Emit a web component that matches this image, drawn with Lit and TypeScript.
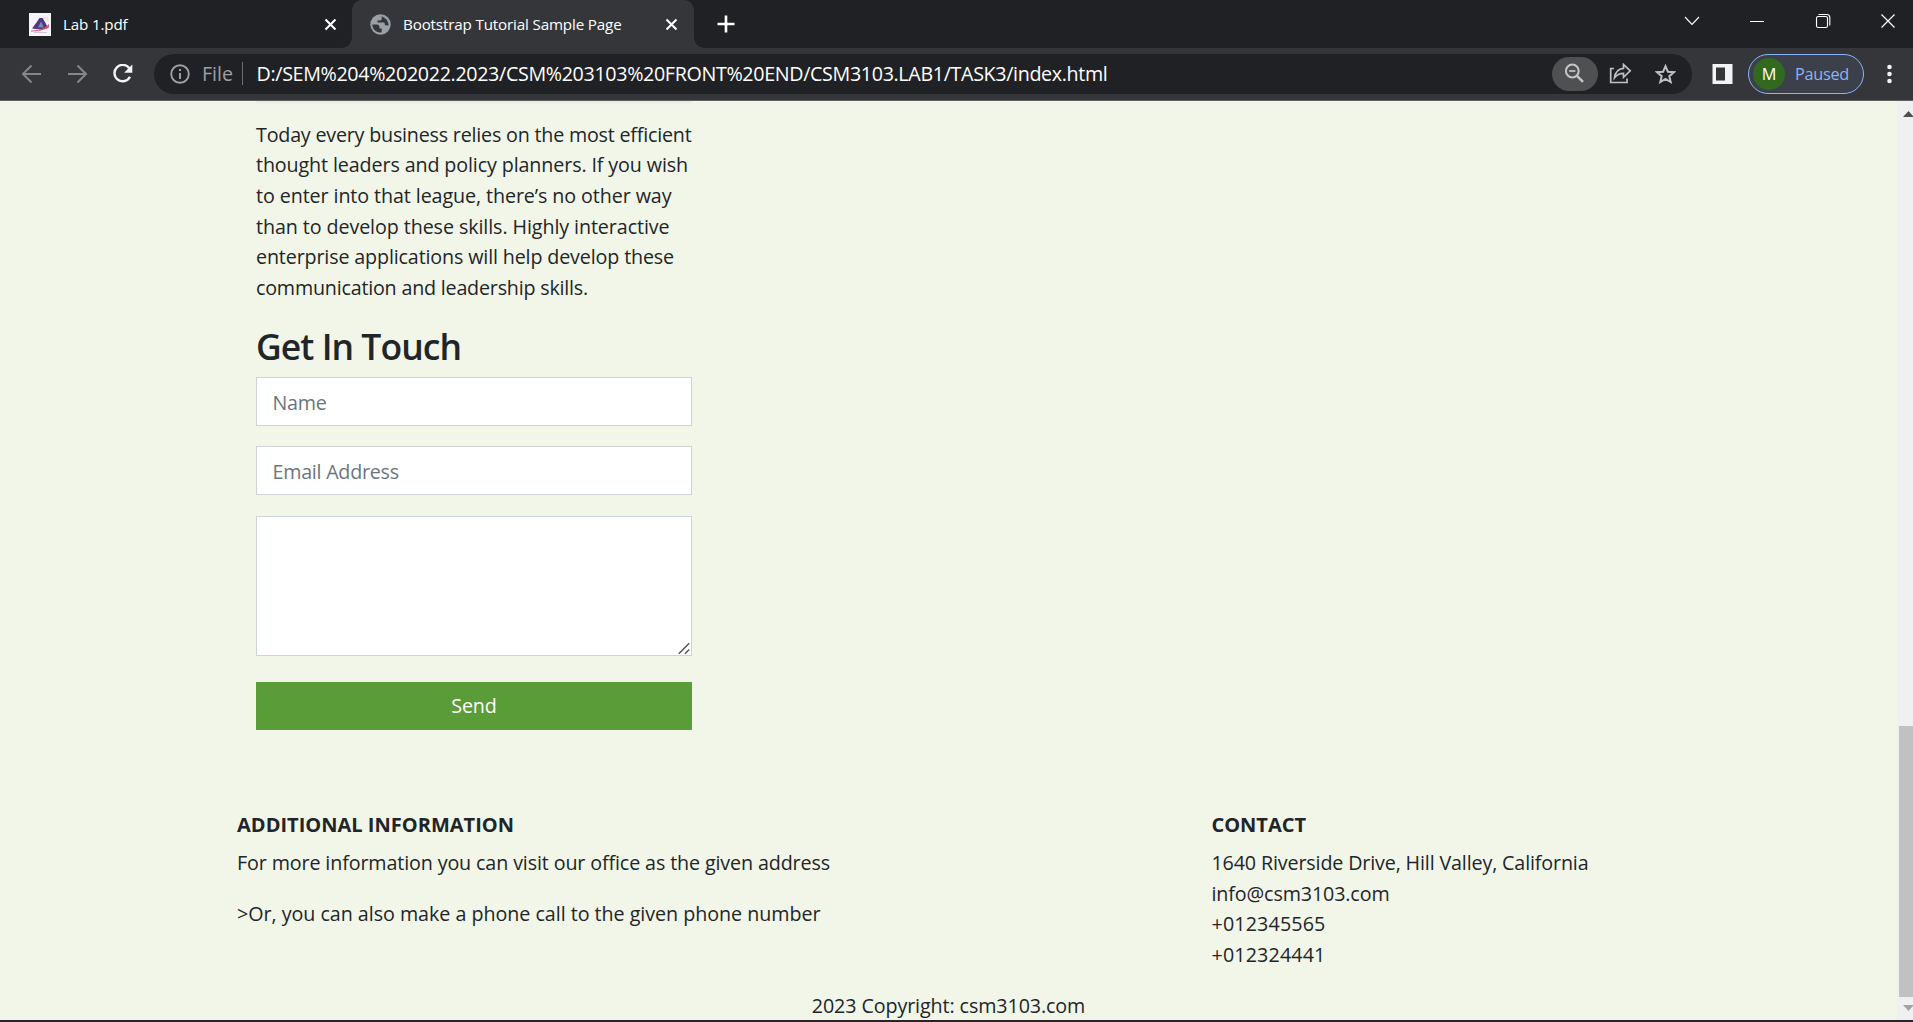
import { LitElement, html, css, svg } from "lit";
import { customElement, property, query } from "lit/decorators.js";

/** A single line of text whose tracking is computed so that it spans a given width. */
@customElement("fit-line")
class FitLine extends LitElement {
  @property({ type: Number }) span = 0;
  @query("span") private run!: HTMLSpanElement;

  static styles = css`
    :host { display: block; white-space: nowrap; line-height: inherit; }
    span { display: inline-block; line-height: inherit; }
  `;

  async firstUpdated() {
    this.fit();
    await document.fonts.ready;
    this.fit();
  }

  private fit() {
    const count = (this.textContent ?? "").length;
    if (!this.span || !count) return;
    this.run.style.letterSpacing = "0px";
    const natural = this.run.getBoundingClientRect().width;
    this.run.style.letterSpacing = `${(this.span - natural) / count}px`;
  }

  render() {
    return html`<span><slot></slot></span>`;
  }
}

@customElement("browser-tabs")
class BrowserTabs extends LitElement {
  static styles = css`
    :host { display: flex; height: 48px; background: #202124; color: #fff; font-size: 15.2px; line-height: 48px; }
    svg { display: block; flex: none; }
    .tab { display: flex; align-items: center; box-sizing: border-box; height: 48px; }
    .idle { width: 352px; padding-left: 29px; }
    .idle .label { margin-left: 12px; width: 261px; }
    .active { position: relative; width: 342px; padding-left: 18px; background: #35363a; border-radius: 10px 10px 0 0; }
    .active .label { margin-left: 12px; width: 262px; }
    .active::before, .active::after { content: ""; position: absolute; bottom: 0; width: 10px; height: 10px; }
    .active::before { left: -10px; background: radial-gradient(circle at 0 0, transparent 9.5px, #35363a 10px); }
    .active::after { right: -10px; background: radial-gradient(circle at 100% 0, transparent 9.5px, #35363a 10px); }
    .plus { margin: 15px 0 0 22.5px; }
    .window { display: flex; margin-left: auto; padding: 13px 17px 0 0; gap: 49px; }
    .window svg:nth-child(-n + 2) { margin: 0 1px 0 -1px; }
  `;

  render() {
    const cross = svg`<path d="M1.5 1.5 11.5 11.5M11.5 1.5 1.5 11.5" fill="none" stroke="#fff" stroke-width="2.1"/>`;
    return html`
      <div class="tab idle">
        <svg width="22" height="23" viewBox="0 0 22 23">
          <rect width="22" height="23" fill="#f7f5fa" />
          <path d="M14 5h5M17 7h3" stroke="#eed9b8" />
          <path d="m3 15.500 4.500-6 3-4.500h3l2.500 4 3 6-8 1.500Z" fill="#4b3a86" />
          <path d="m9 14.500 3-6 3 6Z" fill="#8c83ae" />
          <path d="M2 17.500c7 0 13-1 18-6.500v3.500c-5 2.500-11 4-18 4Z" fill="#e0506a" />
          <path d="M5 19.500h13" stroke="#cfc6dc" />
        </svg>
        <fit-line class="label" span="64.5">Lab 1.pdf</fit-line>
        <svg width="13" height="13">${cross}</svg>
      </div>
      <div class="tab active">
        <svg width="21" height="21" viewBox="0 0 21 21">
          <circle cx="10.5" cy="10.5" r="10.2" fill="#9aa0a6" />
          <path d="M2.3 10.6h4.2c2 0 3 1.1 3 2.8v1.2h2.2v3.6c-4.8 1.1-9.4-2.6-9.4-7.6ZM9 2.4h2.8v2.2c0 1.2-.8 1.8-2 1.8H7.5v2.2h5.8c1.1 0 1.6.7 1.6 1.7v1h2c.9 0 1.4.2 1.6.7.4-4.3-2.1-7.6-5.8-9l-.6-.8Z" fill="#35363a" />
        </svg>
        <fit-line class="label" span="218.5">Bootstrap Tutorial Sample Page</fit-line>
        <svg width="13" height="13">${cross}</svg>
      </div>
      <svg class="plus" width="18" height="18"><path d="M9 .5v17M.5 9h17" stroke="#fff" stroke-width="2.6" /></svg>
      <div class="window">
        <svg width="16" height="16"><path d="m1 4 7 7.5L15 4" fill="none" stroke="#fff" stroke-width="1.1" /></svg>
        <svg width="16" height="16"><path d="M1 8.5h14" stroke="#fff" /></svg>
        <svg width="16" height="16">
          <rect x="1.5" y="3.5" width="11" height="11" rx="1.8" fill="none" stroke="#fff" stroke-width="1.1" />
          <path d="M3.5 1.5h8.3a3 3 0 0 1 3 3v8" fill="none" stroke="#fff" stroke-width="1.1" />
        </svg>
        <svg width="16" height="16"><path d="m1.500 1.500 13 13m0-13-13 13" stroke="#fff" stroke-width="1.2" /></svg>
      </div>
    `;
  }
}

@customElement("browser-toolbar")
class BrowserToolbar extends LitElement {
  static styles = css`
    :host { display: flex; align-items: center; box-sizing: border-box; height: 53px; padding: 0 17px 1px 21px;
      background: #35363a; border-bottom: 1px solid #5d5e61; color: #fff; }
    svg { display: block; flex: none; }
    .nav { display: flex; gap: 25px; width: 133px; }
    .nav svg:last-child { margin-left: -1px; }
    .omnibox { display: flex; align-items: center; box-sizing: border-box; width: 1538px; height: 40px;
      padding: 0 14px 0 16px; border-radius: 20px; background: #202124; font-size: 19.7px; line-height: 41px; }
    .scheme { margin-left: 12px; width: 40px; color: #9aa0a6; }
    .rule { width: 1px; height: 23px; background: #6b6e73; }
    .url { margin-left: 13.5px; width: 1295px; }
    .zoom { display: flex; align-items: center; justify-content: center; width: 46px; height: 34px; flex: none;
      border-radius: 17px; background: #4f5052; }
    .zoom svg { margin-right: 2px; }
    .share { margin-left: 11px; }
    .star { margin-left: 23px; }
    .panel { margin-left: 20px; }
    .profile { display: flex; align-items: center; box-sizing: border-box; width: 116px; height: 40px;
      margin-left: 15px; padding-left: 4px; border: 1.5px solid #8ab4f8; border-radius: 20px; background: #3c404a;
      color: #8ab4f8; font-size: 16.3px; line-height: 36px; }
    .avatar { display: flex; justify-content: center; width: 32px; height: 32px; border-radius: 50%;
      background: #33691e; color: #fff; line-height: 32px; margin-right: 10px; }
    .menu { margin-left: auto; }
  `;

  render() {
    return html`
      <div class="nav">
        <svg width="21" height="20"><path d="M20 10H2M10.5 1.5 2 10l8.5 8.5" fill="none" stroke="#85868a" stroke-width="2" /></svg>
        <svg width="21" height="20"><path d="M1 10h18M10.5 1.5 19 10l-8.5 8.5" fill="none" stroke="#85868a" stroke-width="2" /></svg>
        <svg width="21" height="20">
          <path d="M17.3 4.2A8.2 8.2 0 1 0 18 12.8" fill="none" stroke="#f1f3f4" stroke-width="2.4" />
          <path d="M20.3.6v8.2h-8.2Z" fill="#f1f3f4" />
        </svg>
      </div>
      <div class="omnibox">
        <svg width="20" height="20">
          <circle cx="10" cy="10" r="8.8" fill="none" stroke="#9aa0a6" stroke-width="1.9" />
          <path d="M10 9v6M10 5v2.1" stroke="#9aa0a6" stroke-width="2" />
        </svg>
        <fit-line class="scheme" span="31">File</fit-line>
        <span class="rule"></span>
        <fit-line class="url" span="851">D:/SEM%204%202022.2023/CSM%203103%20FRONT%20END/CSM3103.LAB1/TASK3/index.html</fit-line>
        <div class="zoom">
          <svg width="22" height="21">
            <circle cx="9.3" cy="8" r="6.4" fill="none" stroke="#c5c6c8" stroke-width="2" />
            <path d="M6.2 8h6.2" stroke="#c5c6c8" stroke-width="1.7" />
            <path d="m14 12.8 6 6" stroke="#c5c6c8" stroke-width="2.4" />
          </svg>
        </div>
        <svg class="share" width="23" height="21" viewBox="0 0 23 21" fill="none" stroke="#bdc1c6" stroke-width="1.7">
          <path d="M5 5.5H1.7v14H18v-4" />
          <path d="M14.5 1.5v3.8c-5.5.5-8.4 4-9 9.5 2.5-3.3 5.2-4.4 9-4.4v3.9l6.7-6.5Z" />
        </svg>
        <svg class="star" width="21" height="20" viewBox="0 0 21 20">
          <path d="m10.5 2.2 2.4 5.5 6 .5-4.6 4 1.4 5.8-5.2-3.1L5.3 18l1.4-5.8-4.6-4 6-.5Z" fill="none" stroke="#bdc1c6" stroke-width="2" />
        </svg>
      </div>
      <svg class="panel" width="21" height="20"><path d="M.5 0h20v20H.5ZM4 3.5v13h9v-13Z" fill="#f1f3f4" fill-rule="evenodd" /></svg>
      <div class="profile">
        <span class="avatar">M</span>
        <fit-line span="54">Paused</fit-line>
      </div>
      <svg class="menu" width="13" height="20" fill="#f1f3f4">
        <circle cx="6.5" cy="3" r="2.3" /><circle cx="6.5" cy="10" r="2.3" /><circle cx="6.5" cy="17" r="2.3" />
      </svg>
    `;
  }
}

const ABOUT: [string, number][] = [
  ["Today every business relies on the most efficient", 435.5],
  ["thought leaders and policy planners. If you wish", 432],
  ["to enter into that league, there\u2019s no other way", 415.5],
  ["than to develop these skills. Highly interactive", 413.5],
  ["enterprise applications will help develop these", 418],
  ["communication and leadership skills.", 332],
];

const CONTACT: [string, number][] = [
  ["1640 Riverside Drive, Hill Valley, California", 377],
  ["info@csm3103.com", 178],
  ["+012345565", 114],
  ["+012324441", 114],
];

@customElement("app-root")
class AppRoot extends LitElement {
  static styles = css`
    :host { display: flex; flex-direction: column; width: 100%; height: 1022px; overflow: hidden;
      font-family: "Open Sans", "Noto Sans", sans-serif; background: #f2f6e8; }
    .view { display: flex; height: 919px; border-bottom: 2px solid #2a2229; }
    .page { flex: 1; color: #212529; font-size: 19.7px; line-height: 30.67px; }
    .column { width: 436px; margin-left: 256px; }
    .edge { height: 4px; background: linear-gradient(#e8ecdf, #f2f6e8); }
    .about { padding-top: 14.6px; }
    h2 { margin: 21.4px 0 0; font-size: 35.5px; font-weight: 600; line-height: 43px; height: 52px; }
    input, textarea { display: block; box-sizing: border-box; width: 100%; padding: 0 15.5px; border: 1px solid #ced4da;
      border-radius: 0; background: #fff; font: inherit; outline: none; }
    input { height: 49px; margin-bottom: 20px; padding-top: 1px; letter-spacing: -0.25px; }
    input::placeholder { color: #6c757d; opacity: 1; }
    .message { position: relative; margin-top: 21px; }
    textarea { height: 140px; resize: none; }
    .grip { position: absolute; right: 2px; bottom: 1px; }
    button { display: flex; justify-content: center; width: 100%; height: 48px; margin-top: 26px; padding: 0; border: 0;
      background: #5a9c37; color: #fff; font: inherit; line-height: 47px; }
    .info { display: flex; margin: 79.6px 0 0 237px; }
    .extra { width: 974.5px; }
    h5 { margin: 0 0 7.6px; font-size: 20px; font-weight: 700; line-height: 30.67px; }
    .extra p { margin: 0 0 20.5px; }
    .copy { display: flex; justify-content: center; margin-top: 20.7px; }
    .scroll { display: flex; flex-direction: column; align-items: flex-end; width: 16px; background: #f0f0f0; }
    .thumb { width: 14px; height: 271px; margin: 608px 0 8px; background: #c1c1c1; }
    .scroll svg { display: block; }
  `;

  render() {
    return html`
      <browser-tabs></browser-tabs>
      <browser-toolbar></browser-toolbar>
      <div class="view">
        <main class="page">
          <div class="column">
            <div class="edge"></div>
            <div class="about">${ABOUT.map(([t, w]) => html`<fit-line span=${w}>${t}</fit-line>`)}</div>
            <h2><fit-line span="205">Get In Touch</fit-line></h2>
            <input placeholder="Name" />
            <input placeholder="Email Address" />
            <div class="message">
              <textarea></textarea>
              <svg class="grip" width="12" height="13"><path d="M.8 11.8 11.2 1.2M7 11.8 11.2 7.5" stroke="#555" stroke-width="1.5" /></svg>
            </div>
            <button><fit-line span="45.5">Send</fit-line></button>
          </div>
          <section class="info">
            <div class="extra">
              <h5><fit-line span="277">ADDITIONAL INFORMATION</fit-line></h5>
              <p><fit-line span="593">For more information you can visit our office as the given address</fit-line></p>
              <p><fit-line span="583.5">&gt;Or, you can also make a phone call to the given phone number</fit-line></p>
            </div>
            <div>
              <h5><fit-line span="94.5">CONTACT</fit-line></h5>
              ${CONTACT.map(([t, w]) => html`<fit-line span=${w}>${t}</fit-line>`)}
            </div>
          </section>
          <div class="copy"><fit-line span="273.5">2023 Copyright: csm3103.com</fit-line></div>
        </main>
        <div class="scroll">
          <svg width="11" height="17"><path d="M1 16 6.5 10 12 16Z" fill="#505050" /></svg>
          <div class="thumb"></div>
          <svg width="11" height="10"><path d="M1 0h11L6.5 6Z" fill="#a3a3a3" /></svg>
        </div>
      </div>
    `;
  }
}
